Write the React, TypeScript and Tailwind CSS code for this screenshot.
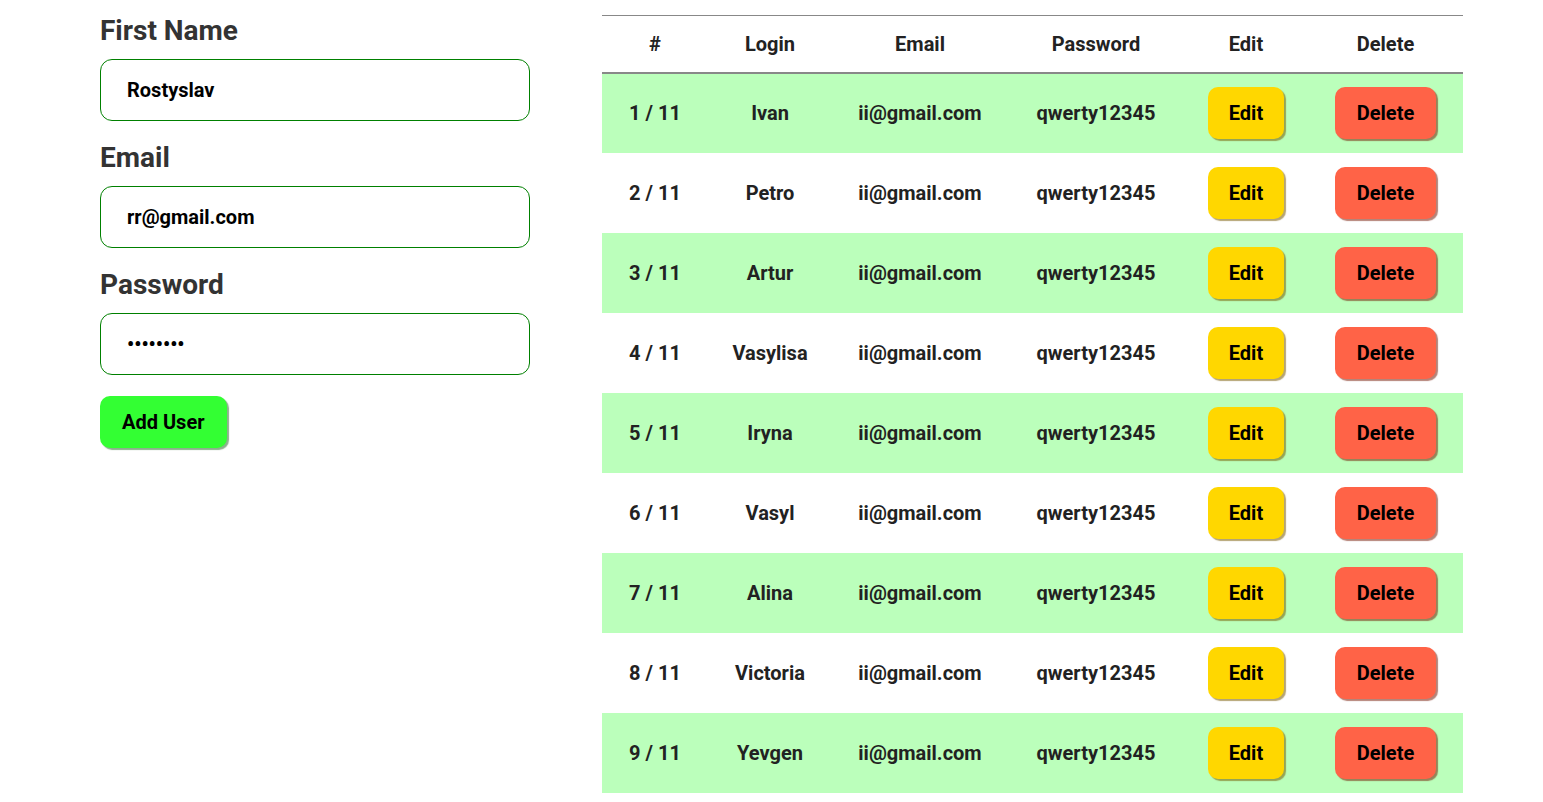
import React from 'react';

// Users admin: a small add-user form on the left, the users table on the right.
const USERS = ['Ivan', 'Petro', 'Artur', 'Vasylisa', 'Iryna', 'Vasyl', 'Alina', 'Victoria', 'Yevgen', 'Oksana', 'Taras'];

const FONT = { fontFamily: 'Roboto, "Noto Sans", sans-serif' };

function Field({ label, value, type = 'text', first = false }: { label: string; value: string; type?: string; first?: boolean }) {
  return (
    <div className={first ? 'pt-[14px]' : 'pt-[20px]'}>
      <label className="mb-[12px] block text-[28px] font-bold leading-[33px] text-[#333]">{label}</label>
      <input
        type={type}
        defaultValue={value}
        readOnly
        className="block h-[62px] w-[430px] rounded-[12px] border border-[#008000] pl-[26px] text-[20px] font-bold text-black outline-none"
      />
    </div>
  );
}

export default function App() {
  return (
    <div className="flex bg-white pl-[100px]" style={FONT}>
      <div className="w-[430px] shrink-0">
        <Field first label="First Name" value="Rostyslav" />
        <Field label="Email" value="rr@gmail.com" />
        <Field label="Password" value="12345678" type="password" />
        <button className="mt-[21px] h-[52px] rounded-[10px] bg-[#33ff33] px-[22px] text-[20px] font-bold text-black shadow-[2px_2px_1px_rgba(0,80,0,0.45)]">
          Add User
        </button>
      </div>

      <div className="ml-[72px] pt-[15px]">
        <table className="w-[861px] border-collapse text-center text-[20px] font-bold text-[#222]">
          <thead>
            <tr className="h-[57px] border-t border-b-2 border-t-[#888] border-b-[#888]">
              <th className="w-[106px] font-bold">#</th>
              <th className="w-[124px] font-bold">Login</th>
              <th className="w-[176px] font-bold">Email</th>
              <th className="w-[176px] font-bold">Password</th>
              <th className="w-[124px] font-bold">Edit</th>
              <th className="font-bold">Delete</th>
            </tr>
          </thead>
          <tbody>
            {USERS.map((name, i) => (
              <tr key={name} className={`h-[80px] ${i % 2 === 0 ? 'bg-[#bbffbb]' : 'bg-white'}`}>
                <td>{i + 1} / {USERS.length}</td>
                <td>{name}</td>
                <td>ii@gmail.com</td>
                <td>qwerty12345</td>
                <td>
                  <button className="h-[52px] rounded-[10px] bg-[#ffd700] px-[21px] font-bold text-black shadow-[2px_2px_1px_rgba(120,90,0,0.55)]">
                    Edit
                  </button>
                </td>
                <td>
                  <button className="h-[52px] rounded-[10px] bg-[#ff6347] px-[22px] font-bold text-black shadow-[2px_2px_1px_rgba(120,30,10,0.55)]">
                    Delete
                  </button>
                </td>
              </tr>
            ))}
          </tbody>
        </table>
      </div>
    </div>
  );
}
